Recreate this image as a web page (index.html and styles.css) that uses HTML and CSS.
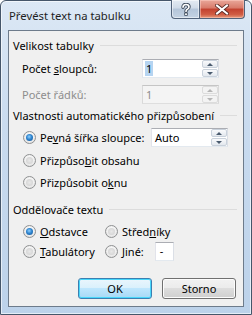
FILE: index.html
```html
<!DOCTYPE html>
<html lang="cs">
<head>
<meta charset="utf-8">
<link rel="stylesheet" href="styles.css">
</head>
<body>
<div class="window">
  <div class="titlebar">
    <span class="title">Převést text na tabulku</span>
    <div class="caption-btns">
      <div class="cbtn help">
        <svg width="12" height="13" viewBox="0 0 12 13"><path d="M3 4.2 Q3 1.5 6 1.5 Q9 1.5 9 4 Q9 5.6 7 6.5 Q6 7 6 8.5" fill="none" stroke="#3d4a5a" stroke-width="3.4" stroke-linecap="round"/><path d="M3 4.2 Q3 1.5 6 1.5 Q9 1.5 9 4 Q9 5.6 7 6.5 Q6 7 6 8.5" fill="none" stroke="#fff" stroke-width="1.6" stroke-linecap="round"/><rect x="4.3" y="9.6" width="3.4" height="3.2" rx="0.6" fill="#3d4a5a"/><rect x="5.1" y="10.4" width="1.8" height="1.6" fill="#fff"/></svg>
      </div>
      <div class="cbtn close">
        <svg width="14" height="11" viewBox="0 0 14 11"><path d="M2 1.5 L12 9.5 M12 1.5 L2 9.5" stroke="#5a2a25" stroke-width="3.8" stroke-linecap="square"/><path d="M2 1.5 L12 9.5 M12 1.5 L2 9.5" stroke="#fff" stroke-width="2" stroke-linecap="square"/></svg>
      </div>
    </div>
  </div>
  <div class="client">
    <div class="group-head gh1"><span>Velikost tabulky</span><i class="rule"></i></div>
    <div class="row r1">
      <span class="lbl">Počet <u>s</u>loupců:</span>
      <div class="spin"><span class="val"><span class="sel">1</span></span><div class="arrows"><span class="up"></span><span class="down"></span></div></div>
    </div>
    <div class="row r2 disabled">
      <span class="lbl">Počet řádků:</span>
      <div class="spin dis"><span class="val">1</span><div class="arrows"><span class="up"></span><span class="down"></span></div></div>
    </div>

    <div class="group-head gh2"><span>Vlastnosti automatického přizpůsobení</span><i class="rule"></i></div>
    <div class="row r3">
      <span class="radio on"></span><span class="rlbl wide">Pe<u>v</u>ná šířka sloupce:</span>
      <div class="spin auto"><span class="val">Auto</span><div class="arrows"><span class="up"></span><span class="down"></span></div></div>
    </div>
    <div class="row r4"><span class="radio"></span><span class="rlbl">Přizpůso<u>b</u>it obsahu</span></div>
    <div class="row r5"><span class="radio"></span><span class="rlbl">Přizpůsobit o<u>k</u>nu</span></div>

    <div class="group-head gh3"><span>Oddělovače textu</span><i class="rule"></i></div>
    <div class="grid2">
      <div class="row r6"><span class="radio on"></span><span class="rlbl"><u>O</u>dstavce</span></div>
      <div class="row r6"><span class="radio"></span><span class="rlbl">Střed<u>n</u>íky</span></div>
      <div class="row r7"><span class="radio"></span><span class="rlbl"><u>T</u>abulátory</span></div>
      <div class="row r7"><span class="radio"></span><span class="rlbl"><u>J</u>iné:</span><span class="other">-</span></div>
    </div>

    <div class="buttons">
      <div class="btn default">OK</div>
      <div class="btn">Storno</div>
    </div>
  </div>
</div>
</body>
</html>
```

FILE: styles.css
```css
* { box-sizing: border-box; }
html, body { margin: 0; padding: 0; }
body {
  width: 252px;
  height: 315px;
  background: #fff;
  font-family: "Noto Sans", "Open Sans", sans-serif;
  font-size: 11px;
  color: #000;
}
.window {
  width: 252px;
  height: 315px;
  border: 1px solid #45566a;
  border-radius: 6px 6px 0 0;
  background: linear-gradient(180deg, #dce8f5 0%, #c9dbef 40%, #bcd2ea 100%);
  display: flex;
  flex-direction: column;
  padding: 0 7px 7px 7px;
  box-shadow: inset 0 0 0 1px rgba(255,255,255,0.6);
}
.titlebar {
  height: 29px;
  display: flex;
  justify-content: space-between;
  align-items: flex-start;
}
.title {
  margin-top: 7px;
  margin-left: 1px;
  font-size: 11.3px;
  color: #1e1e1e;
}
.caption-btns {
  display: flex;
  margin-right: -1px;
  margin-top: -1px;
}
.cbtn {
  height: 19px;
  display: flex;
  align-items: center;
  justify-content: center;
  border: 1px solid #52637a;
  border-top: none;
}
.help {
  width: 29px;
  border-radius: 0 0 0 4px;
  background: linear-gradient(180deg, #e4ebf3 0%, #d0dbe8 45%, #b4c5d9 50%, #c4d3e3 100%);
  box-shadow: inset 0 0 0 1px rgba(255,255,255,0.5);
}
.close {
  width: 45px;
  border-left: none;
  border-radius: 0 0 4px 0;
  background: linear-gradient(180deg, #e9a79a 0%, #d87a69 45%, #c2412f 50%, #d05c43 80%, #e59a7b 100%);
  box-shadow: inset 0 0 0 1px rgba(255,210,200,0.5);
}
.client {
  flex: 1;
  background: #f0f0f0;
  border: 1px solid #6d7b8b;
  display: flex;
  flex-direction: column;
  padding: 6px 6px 0 4px;
}
.group-head {
  display: flex;
  align-items: center;
  height: 16px;
}
.group-head span { white-space: nowrap; }
.group-head .rule {
  flex: 1;
  height: 1px;
  background: #dcdcdc;
  margin-left: 6px;
  margin-top: 1px;
}
.row {
  display: flex;
  align-items: center;
  height: 20px;
}
.lbl { width: 129px; padding-left: 9px; }
.disabled .lbl { color: #8d8d8d; }
.rlbl { white-space: nowrap; }
.rlbl.wide { width: 97px; }
.r1 { margin-top: 5px; }
.r2 { margin-top: 6px; }
.gh2 { margin-top: 3px; }
.r3 { margin-top: 4px; }
.r4 { margin-top: 3px; }
.r5 { margin-top: 2px; }
.gh3 { margin-top: 9px; }
.spin {
  width: 77px;
  height: 19px;
  border: 1px solid #abadb3;
  border-color: #abadb3 #dbdfe6 #e3e9ef #e2e3ea;
  background: #fff;
  display: flex;
  align-items: center;
  justify-content: space-between;
  padding-left: 3px;
}
.spin.dis { background: #f4f4f4; border-color: #c5c5c5 #d9d9d9 #dedede #d9d9d9; }
.spin.dis .val { color: #8d8d8d; }
.spin.auto { margin-left: 14px; }
.val { line-height: 15px; }
.sel { padding: 0 1px; margin-left: -1px; background: #b6d4f1; color: #000; }
.arrows {
  width: 16px;
  height: 17px;
  display: flex;
  flex-direction: column;
  gap: 1px;
}
.arrows span {
  flex: 1;
  border: 1px solid #c9d1db;
  background: linear-gradient(180deg, #f9fafc, #e3e8ee);
  border-radius: 2px;
  position: relative;
}
.arrows span::after {
  content: "";
  position: absolute;
  left: 4px;
  border-left: 3px solid transparent;
  border-right: 3px solid transparent;
}
.arrows .up::after { top: 2px; border-bottom: 3px solid #4a5b6e; }
.arrows .down::after { top: 2px; border-top: 3px solid #4a5b6e; }
.dis .arrows span { border-color: #dcdcdc; background: #f3f3f3; }
.dis .arrows .up::after { border-bottom-color: #b5b5b5; }
.dis .arrows .down::after { border-top-color: #b5b5b5; }
.radio {
  width: 13px;
  height: 13px;
  border-radius: 50%;
  border: 1px solid #8f9192;
  background: radial-gradient(circle at 50% 40%, #ffffff 0%, #f4f4f4 40%, #d8d8d8 100%);
  margin-left: 10px;
  margin-right: 4px;
  position: relative;
  flex: none;
}
.radio::after {
  content: "";
  position: absolute;
  left: 2px; top: 2px;
  width: 7px; height: 7px;
  border-radius: 50%;
  background: radial-gradient(circle at 50% 50%, #e8e8e8, #cfcfcf);
}
.radio.on::after {
  background: radial-gradient(circle at 45% 40%, #8fd0ff 0%, #2f85cf 45%, #114f8f 100%);
}
.grid2 {
  display: grid;
  grid-template-columns: 82px 1fr;
  margin-top: 4px;
}
.other {
  width: 19px;
  height: 19px;
  border: 1px solid #abadb3;
  border-color: #abadb3 #dbdfe6 #e3e9ef #e2e3ea;
  background: #fff;
  margin-left: 11px;
  padding-left: 4px;
  line-height: 16px;
}
.buttons {
  display: flex;
  gap: 10px;
  justify-content: flex-end;
  margin-top: 17px;
  padding-right: 1px;
}
.btn {
  width: 74px;
  height: 21px;
  border: 1px solid #707070;
  border-radius: 3px;
  background: linear-gradient(180deg, #f2f2f2 0%, #ebebeb 49%, #dddddd 50%, #cfcfcf 100%);
  box-shadow: inset 0 0 0 1px #fcfcfc;
  display: flex;
  align-items: center;
  justify-content: center;
}
.btn.default {
  border-color: #3c7fb1;
  box-shadow: inset 0 0 0 1px #48d7fb;
  background: linear-gradient(180deg, #eaf6fd 0%, #d9f0fc 49%, #bee6fd 50%, #a7d9f5 100%);
}
```
